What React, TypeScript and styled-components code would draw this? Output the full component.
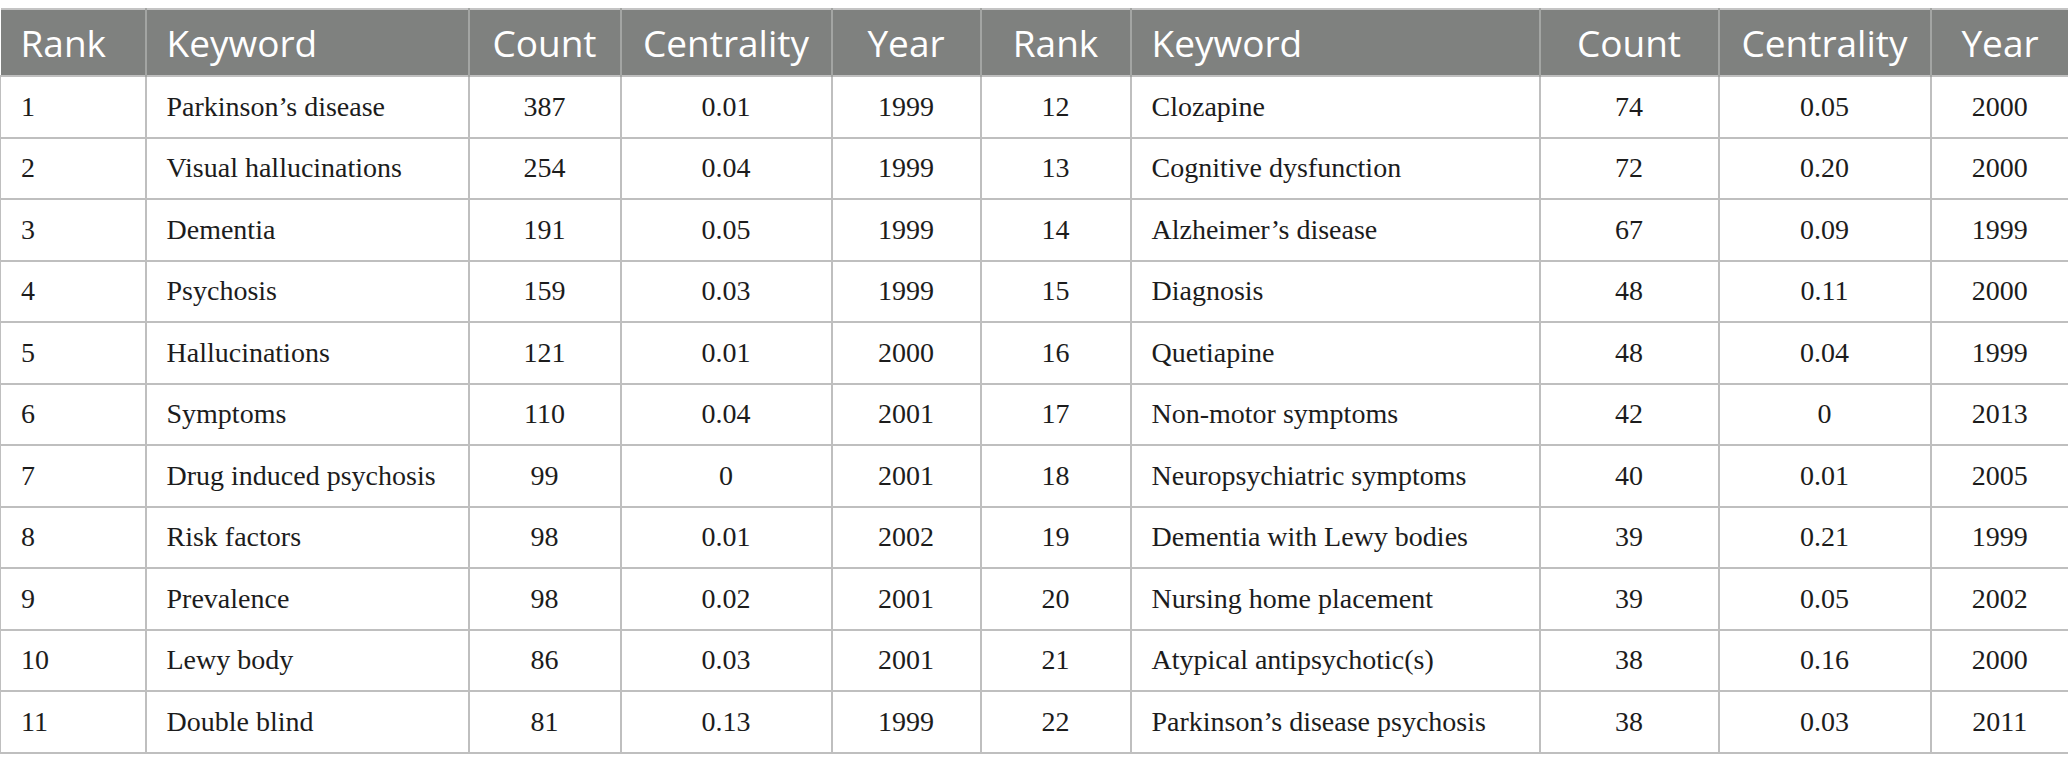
import styled, { createGlobalStyle } from 'styled-components';

const GlobalStyle = createGlobalStyle`
  html, body {
    margin: 0;
    padding: 0;
    background: #ffffff;
  }
`;

const Page = styled.div`
  width: 2068px;
  padding-top: 8px;
  background: #ffffff;
`;

const Table = styled.table`
  width: 2068px;
  table-layout: fixed;
  border-collapse: collapse;
  border-top: 2px solid #c4c4c4;
  border-bottom: 2px solid #bdbdbd;
`;

const HeadRow = styled.tr`
  height: 67px;
  background: #7f817f;
`;

const HeadCell = styled.th<{ $align?: 'left' | 'center' }>`
  padding: 0 20px;
  text-align: ${({ $align }) => $align ?? 'center'};
  font-family: 'Open Sans', 'Noto Sans', sans-serif;
  font-size: 37px;
  font-weight: 400;
  color: #ffffff;
  border-left: 2px solid #a3a5a3;
  white-space: nowrap;

  &:first-child {
    border-left: none;
  }
`;

const BodyRow = styled.tr`
  height: 61.5px;
`;

const Cell = styled.td<{ $align?: 'left' | 'center' }>`
  padding: 0 20px;
  text-align: ${({ $align }) => $align ?? 'center'};
  font-family: 'Liberation Serif', 'Times New Roman', serif;
  font-size: 28px;
  color: #1c1c1c;
  border: 2px solid #bfbfbf;
  white-space: nowrap;

  &:first-child {
    border-left: 1px solid #bfbfbf;
  }
  &:last-child {
    border-right: 1px solid #bfbfbf;
  }
`;

type Entry = [number, string, number, string, number];

const rows: [Entry, Entry][] = [
  [[1, 'Parkinson’s disease', 387, '0.01', 1999], [12, 'Clozapine', 74, '0.05', 2000]],
  [[2, 'Visual hallucinations', 254, '0.04', 1999], [13, 'Cognitive dysfunction', 72, '0.20', 2000]],
  [[3, 'Dementia', 191, '0.05', 1999], [14, 'Alzheimer’s disease', 67, '0.09', 1999]],
  [[4, 'Psychosis', 159, '0.03', 1999], [15, 'Diagnosis', 48, '0.11', 2000]],
  [[5, 'Hallucinations', 121, '0.01', 2000], [16, 'Quetiapine', 48, '0.04', 1999]],
  [[6, 'Symptoms', 110, '0.04', 2001], [17, 'Non-motor symptoms', 42, '0', 2013]],
  [[7, 'Drug induced psychosis', 99, '0', 2001], [18, 'Neuropsychiatric symptoms', 40, '0.01', 2005]],
  [[8, 'Risk factors', 98, '0.01', 2002], [19, 'Dementia with Lewy bodies', 39, '0.21', 1999]],
  [[9, 'Prevalence', 98, '0.02', 2001], [20, 'Nursing home placement', 39, '0.05', 2002]],
  [[10, 'Lewy body', 86, '0.03', 2001], [21, 'Atypical antipsychotic(s)', 38, '0.16', 2000]],
  [[11, 'Double blind', 81, '0.13', 1999], [22, 'Parkinson’s disease psychosis', 38, '0.03', 2011]],
];

const widths = [145, 323, 152, 211, 149, 150, 409, 179, 212, 138];

export default function App() {
  return (
    <Page>
      <GlobalStyle />
      <Table>
        <colgroup>
          {widths.map((w, i) => (
            <col key={i} style={{ width: w }} />
          ))}
        </colgroup>
        <thead>
          <HeadRow>
            <HeadCell $align="left">Rank</HeadCell>
            <HeadCell $align="left">Keyword</HeadCell>
            <HeadCell>Count</HeadCell>
            <HeadCell>Centrality</HeadCell>
            <HeadCell>Year</HeadCell>
            <HeadCell>Rank</HeadCell>
            <HeadCell $align="left">Keyword</HeadCell>
            <HeadCell>Count</HeadCell>
            <HeadCell>Centrality</HeadCell>
            <HeadCell>Year</HeadCell>
          </HeadRow>
        </thead>
        <tbody>
          {rows.map(([a, b]) => (
            <BodyRow key={a[0]}>
              <Cell $align="left">{a[0]}</Cell>
              <Cell $align="left">{a[1]}</Cell>
              <Cell>{a[2]}</Cell>
              <Cell>{a[3]}</Cell>
              <Cell>{a[4]}</Cell>
              <Cell>{b[0]}</Cell>
              <Cell $align="left">{b[1]}</Cell>
              <Cell>{b[2]}</Cell>
              <Cell>{b[3]}</Cell>
              <Cell>{b[4]}</Cell>
            </BodyRow>
          ))}
        </tbody>
      </Table>
    </Page>
  );
}
